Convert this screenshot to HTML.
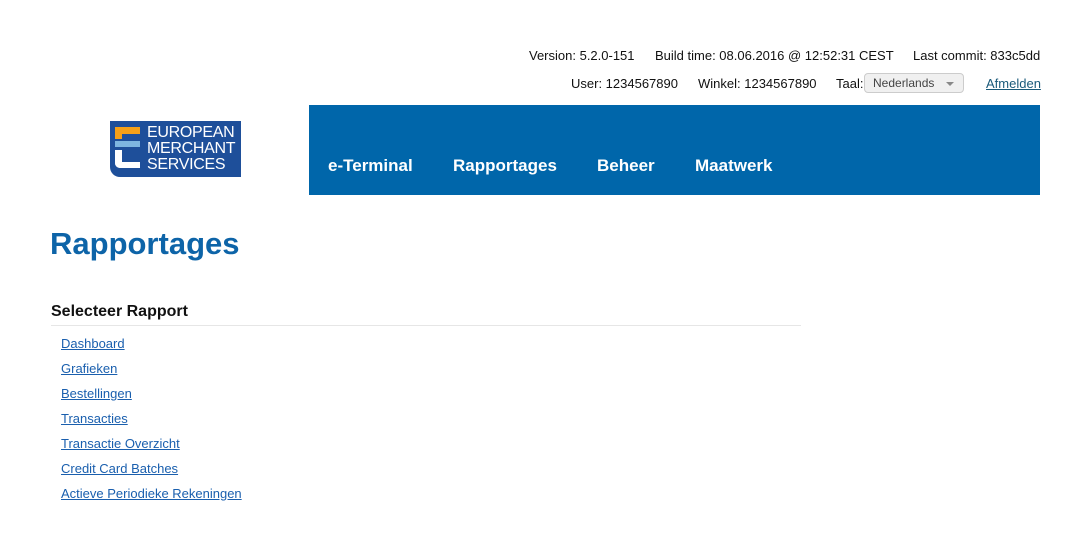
<!DOCTYPE html>
<html><head><style>
body{margin:0;width:1091px;height:551px;background:#fff;font-family:"Liberation Sans",Arial,sans-serif;position:relative;overflow:hidden}
.t{position:absolute;font-size:13px;color:#111;white-space:nowrap}
a{color:#1a5fae;text-decoration:underline}
.nav{position:absolute;left:309px;top:105px;width:731px;height:90px;background:#0066aa}
.nav span{position:absolute;top:51px;color:#fff;font-weight:bold;font-size:17px}
.links a{position:absolute;left:61px;font-size:13px}
</style></head><body>
<div class="t" style="left:529px;top:48px">Version: 5.2.0-151</div>
<div class="t" style="left:655px;top:48px">Build time: 08.06.2016 @ 12:52:31 CEST</div>
<div class="t" style="left:913px;top:48px">Last commit: 833c5dd</div>
<div class="t" style="left:571px;top:76px">User: 1234567890</div>
<div class="t" style="left:698px;top:76px">Winkel: 1234567890</div>
<div class="t" style="left:836px;top:76px">Taal:</div>
<div style="position:absolute;left:864px;top:73px;width:100px;height:20px;border:1px solid #ccc;border-radius:4px;background:#f0f0f0;font-size:12px;color:#444;box-sizing:border-box;padding:2px 0 0 8px">Nederlands<span style="position:absolute;right:9px;top:8px;border-left:4px solid transparent;border-right:4px solid transparent;border-top:4px solid #888"></span></div>
<a class="t" style="left:986px;top:76px;color:#1a5a7a">Afmelden</a>
<div style="position:absolute;left:110px;top:121px;width:131px;height:56px;background:#1e4f9a;border-bottom-left-radius:10px">
<div style="position:absolute;left:5px;top:6px;width:25px;height:7px;background:#f5a018"></div>
<div style="position:absolute;left:5px;top:6px;width:7px;height:12px;background:#f5a018"></div>
<div style="position:absolute;left:5px;top:20px;width:25px;height:6px;background:#7eb6e0"></div>
<div style="position:absolute;left:5px;top:29px;width:7px;height:18px;background:#fff;border-bottom-left-radius:5px"></div>
<div style="position:absolute;left:5px;top:41px;width:25px;height:6px;background:#fff;border-bottom-left-radius:5px"></div>
<div style="position:absolute;left:37px;top:4px;color:#fff;font-size:16px;line-height:16px;letter-spacing:-0.3px">EUROPEAN<br>MERCHANT<br>SERVICES</div>
</div>
<div class="nav"><span style="left:19px">e-Terminal</span><span style="left:144px">Rapportages</span><span style="left:288px">Beheer</span><span style="left:386px">Maatwerk</span></div>
<div style="position:absolute;left:50px;top:226px;font-size:31px;font-weight:bold;color:#0d64a8">Rapportages</div>
<div style="position:absolute;left:51px;top:303px;font-size:16px;font-weight:bold;color:#111">Selecteer Rapport</div>
<div style="position:absolute;left:51px;top:325px;width:750px;height:1px;background:#e6e6e6"></div>
<div class="links">
<a style="top:336px">Dashboard</a>
<a style="top:361px">Grafieken</a>
<a style="top:386px">Bestellingen</a>
<a style="top:411px">Transacties</a>
<a style="top:436px">Transactie Overzicht</a>
<a style="top:461px">Credit Card Batches</a>
<a style="top:486px">Actieve Periodieke Rekeningen</a>
</div>
</body></html>
